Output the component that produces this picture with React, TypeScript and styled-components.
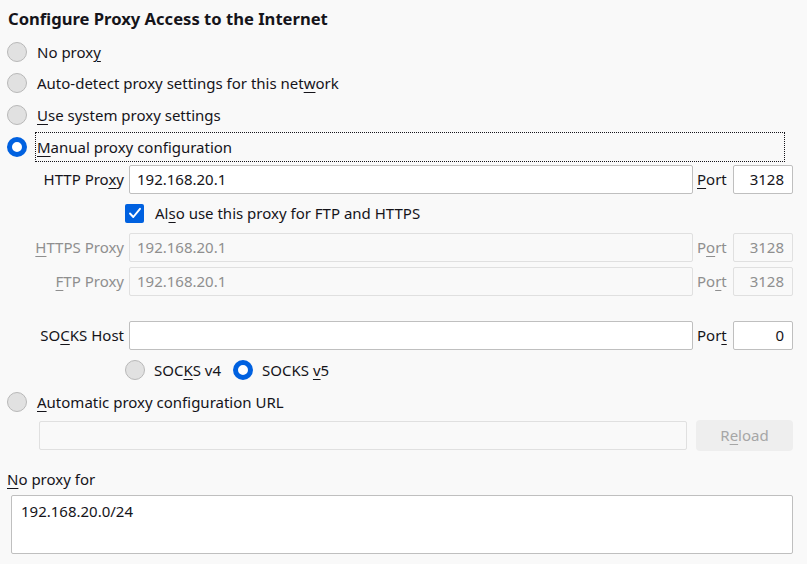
import React from "react";
import styled, { createGlobalStyle } from "styled-components";

const GlobalStyle = createGlobalStyle`
  html, body {
    margin: 0;
    padding: 0;
    background: #f9f9f9;
  }
  body {
    font-family: "Noto Sans", "Open Sans", sans-serif;
    font-size: 15px;
    color: #15141a;
  }
`;

const Page = styled.div`
  width: 807px;
  height: 564px;
  box-sizing: border-box;
  padding: 8px 14px 0 7px;
  background: #f9f9f9;
  overflow: hidden;
`;

const Title = styled.h1`
  margin: 0 0 6px 1px;
  height: 22px;
  line-height: 22px;
  font-size: 16.6px;
  font-weight: 700;
`;

const Key = styled.span`
  text-decoration: underline;
  text-underline-offset: 3px;
  text-decoration-thickness: 1px;
`;

const OptionRow = styled.div<{ $h?: number; $mt?: number }>`
  display: flex;
  align-items: center;
  height: ${(p) => p.$h ?? 31.67}px;
  margin-top: ${(p) => p.$mt ?? 0}px;
`;

const Radio = styled.span<{ $checked?: boolean }>`
  flex: none;
  box-sizing: border-box;
  width: 20px;
  height: 20px;
  border-radius: 50%;
  background: ${(p) => (p.$checked ? "#ffffff" : "#e1e1e1")};
  border: ${(p) => (p.$checked ? "5px solid #0061e0" : "1px solid #b8b8b8")};
`;

const OptionLabel = styled.span<{ $focused?: boolean }>`
  flex: ${(p) => (p.$focused ? "1" : "none")};
  margin-left: 8px;
  margin-right: ${(p) => (p.$focused ? "8px" : "0")};
  padding: 0 1px;
  height: 30px;
  line-height: 29px;
  box-sizing: border-box;
  border: 1px dotted ${(p) => (p.$focused ? "#15141a" : "transparent")};
`;

const Fields = styled.div`
  margin: 2px 0 0 28px;
`;

const FieldRow = styled.div<{ $mt?: number }>`
  display: flex;
  align-items: center;
  margin-top: ${(p) => p.$mt ?? 0}px;
  height: 29px;
`;

const FieldLabel = styled.span<{ $disabled?: boolean }>`
  width: 89px;
  margin-right: 5px;
  text-align: right;
  white-space: nowrap;
  color: ${(p) => (p.$disabled ? "#8f8f8f" : "#15141a")};
`;

const TextBox = styled.div<{ $disabled?: boolean }>`
  box-sizing: border-box;
  height: 29px;
  line-height: 27px;
  padding: 0 8px 0 7px;
  border: 1px solid ${(p) => (p.$disabled ? "#e0e0e0" : "#bfbfbf")};
  border-radius: 2px;
  background: ${(p) => (p.$disabled ? "#f9f9f9" : "#ffffff")};
  color: ${(p) => (p.$disabled ? "#8f8f8f" : "#15141a")};
  white-space: nowrap;
  overflow: hidden;
`;

const HostBox = styled(TextBox)`
  flex: 1;
`;

const PortLabel = styled.span<{ $disabled?: boolean }>`
  width: 32px;
  margin: 0 4px;
  color: ${(p) => (p.$disabled ? "#8f8f8f" : "#15141a")};
`;

const PortBox = styled(TextBox)`
  width: 60px;
  text-align: right;
`;

const CheckRow = styled.div`
  display: flex;
  align-items: center;
  height: 19px;
  margin: 10px 0 10px 90px;
`;

const Checkbox = styled.span`
  flex: none;
  width: 19px;
  height: 19px;
  border-radius: 2px;
  background: #0061e0;
  display: flex;
  align-items: center;
  justify-content: center;
`;

const CheckText = styled.span`
  margin-left: 11px;
`;

const VersionRow = styled.div`
  display: flex;
  align-items: center;
  height: 20px;
  margin: 10px 0 0 90px;
`;

const VersionLabel = styled.span`
  margin: 0 12px 0 9px;
`;

const UrlRow = styled.div`
  display: flex;
  align-items: center;
  margin: 8px 0 0 32px;
  height: 31px;
`;

const UrlBox = styled(TextBox)`
  flex: 1;
`;

const ReloadButton = styled.div`
  width: 97px;
  height: 31px;
  margin-left: 9px;
  border-radius: 4px;
  background: #eeeeee;
  color: #a6a6a6;
  display: flex;
  align-items: center;
  justify-content: center;
`;

const NoProxyLabel = styled.div`
  margin-top: 19px;
  height: 18px;
  line-height: 18px;
`;

const TextArea = styled.div`
  margin: 7px 0 0 4px;
  box-sizing: border-box;
  height: 59px;
  padding: 6px 9px;
  border: 1px solid #bfbfbf;
  border-radius: 2px;
  background: #ffffff;
  line-height: 18px;
`;

const CheckMark = () => (
  <svg width="14" height="14" viewBox="0 0 14 14">
    <path d="M2 7.5 L5.3 11 L12 2.8" fill="none" stroke="#ffffff" strokeWidth="1.9" strokeLinecap="round" strokeLinejoin="round" />
  </svg>
);

const App: React.FC = () => {
  return (
    <Page>
      <GlobalStyle />
      <Title>Configure Proxy Access to the Internet</Title>

      <OptionRow>
        <Radio />
        <OptionLabel>
          No prox<Key>y</Key>
        </OptionLabel>
      </OptionRow>
      <OptionRow>
        <Radio />
        <OptionLabel>
          Auto-detect proxy settings for this net<Key>w</Key>ork
        </OptionLabel>
      </OptionRow>
      <OptionRow>
        <Radio />
        <OptionLabel>
          <Key>U</Key>se system proxy settings
        </OptionLabel>
      </OptionRow>
      <OptionRow>
        <Radio $checked />
        <OptionLabel $focused>
          <Key>M</Key>anual proxy configuration
        </OptionLabel>
      </OptionRow>

      <Fields>
        <FieldRow>
          <FieldLabel>
            HTTP Pro<Key>x</Key>y
          </FieldLabel>
          <HostBox>192.168.20.1</HostBox>
          <PortLabel>
            <Key>P</Key>ort
          </PortLabel>
          <PortBox>3128</PortBox>
        </FieldRow>

        <CheckRow>
          <Checkbox>
            <CheckMark />
          </Checkbox>
          <CheckText>
            Al<Key>s</Key>o use this proxy for FTP and HTTPS
          </CheckText>
        </CheckRow>

        <FieldRow>
          <FieldLabel $disabled>
            <Key>H</Key>TTPS Proxy
          </FieldLabel>
          <HostBox $disabled>192.168.20.1</HostBox>
          <PortLabel $disabled>
            P<Key>o</Key>rt
          </PortLabel>
          <PortBox $disabled>3128</PortBox>
        </FieldRow>
        <FieldRow $mt={5}>
          <FieldLabel $disabled>
            <Key>F</Key>TP Proxy
          </FieldLabel>
          <HostBox $disabled>192.168.20.1</HostBox>
          <PortLabel $disabled>
            Po<Key>r</Key>t
          </PortLabel>
          <PortBox $disabled>3128</PortBox>
        </FieldRow>

        <FieldRow $mt={25}>
          <FieldLabel>
            SO<Key>C</Key>KS Host
          </FieldLabel>
          <HostBox />
          <PortLabel>
            Por<Key>t</Key>
          </PortLabel>
          <PortBox>0</PortBox>
        </FieldRow>

        <VersionRow>
          <Radio />
          <VersionLabel>
            SOC<Key>K</Key>S v4
          </VersionLabel>
          <Radio $checked />
          <VersionLabel>
            SOCKS <Key>v</Key>5
          </VersionLabel>
        </VersionRow>
      </Fields>

      <OptionRow $h={20} $mt={12}>
        <Radio />
        <OptionLabel>
          <Key>A</Key>utomatic proxy configuration URL
        </OptionLabel>
      </OptionRow>

      <UrlRow>
        <UrlBox $disabled />
        <ReloadButton>
          R<Key>e</Key>load
        </ReloadButton>
      </UrlRow>

      <NoProxyLabel>
        <Key>N</Key>o proxy for
      </NoProxyLabel>
      <TextArea>192.168.20.0/24</TextArea>
    </Page>
  );
};

export default App;
